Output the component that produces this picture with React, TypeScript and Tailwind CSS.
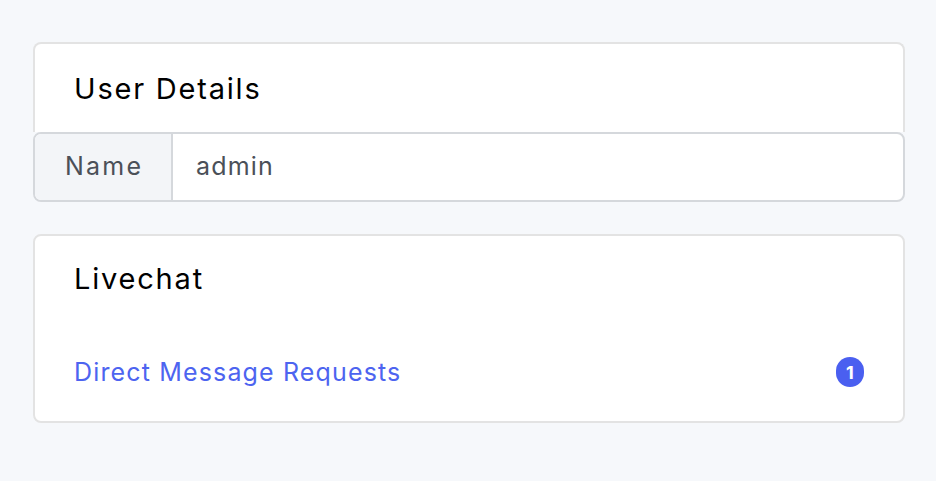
import React from "react";

export default function App() {
  return (
    <div
      className="min-h-[481px] w-full bg-[#f6f8fb] px-[33px] pt-[42px] tracking-[0.072em]"
      style={{ fontFamily: "Inter, 'Noto Sans', sans-serif" }}
    >
      <div className="w-[872px]">
        <div className="rounded-t-[8px] border-2 border-b-0 border-[#e3e3e3] bg-white px-[39px] pb-[26px] pt-[27px]">
          <h2 className="text-[29px] leading-[35px] tracking-[0.062em] text-black">User Details</h2>
        </div>
        <div className="flex h-[70px] overflow-hidden rounded-[8px] border-2 border-[#d5d8dc] bg-white">
          <div className="flex w-[138px] items-center border-r-2 border-[#d5d8dc] bg-[#f3f5f8] pl-[30px] text-[25px] tracking-[0.09em] text-[#4b5058]">
            Name
          </div>
          <div className="flex flex-1 items-center pl-[23px] text-[25px] text-[#4b5058]">admin</div>
        </div>

        <div className="mt-[32px] rounded-[8px] border-2 border-[#e3e3e3] bg-white px-[39px] pb-[34px] pt-[25px]">
          <h2 className="text-[29px] leading-[35px] tracking-[0.062em] text-black">Livechat</h2>
          <div className="mt-[61px] flex h-[30px] items-center justify-between">
            <span className="text-[25px] leading-[30px] text-[#4d64f0]">Direct Message Requests</span>
            <span className="flex h-[30px] w-[28px] items-center justify-center rounded-full bg-[#4a5ff0] text-[18px] font-bold tracking-normal text-white">
              1
            </span>
          </div>
        </div>
      </div>
    </div>
  );
}
